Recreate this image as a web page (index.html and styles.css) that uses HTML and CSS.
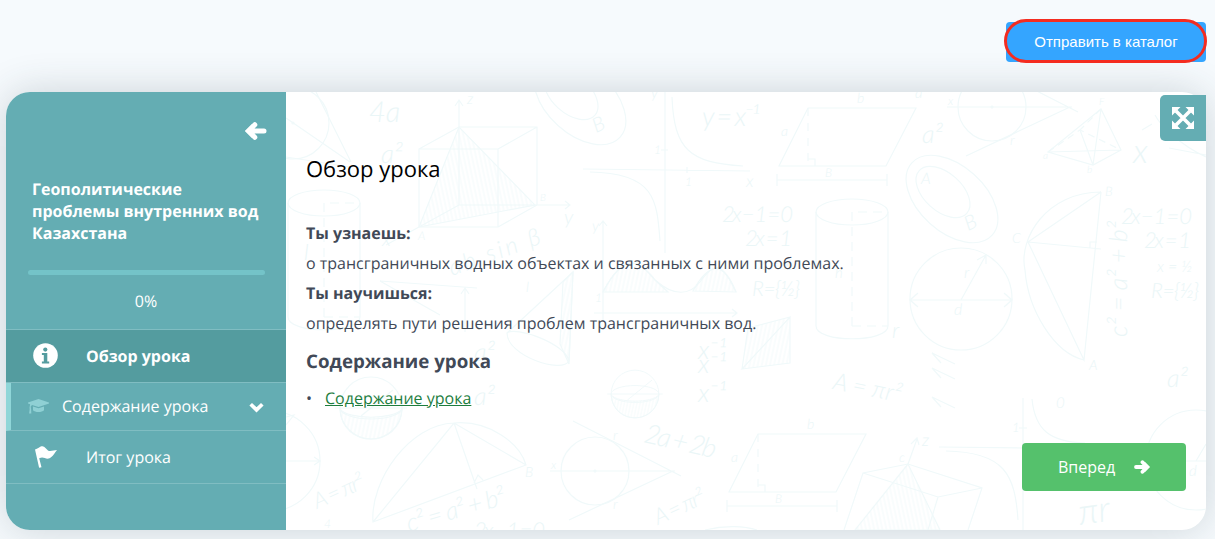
FILE: index.html
```
<!DOCTYPE html>
<html lang="ru">
<head>
    <meta charset="UTF-8">
    <meta name="viewport" content="width=device-width, initial-scale=1.0">
    <title>Обзор урока</title>
    <link rel="stylesheet" href="styles.css">
</head>
<body>

<header class="toolbar">
    <button class="send-button">Отправить в каталог</button>
</header>

<div class="player">
    <aside class="sidebar">
        <button class="collapse" aria-label="Свернуть">
            <svg width="22" height="18" viewBox="0 0 22 18"><path d="M9.800 2.700 3.500 9l6.300 6.300M4 9h15" fill="none" stroke="#fff" stroke-width="5" stroke-linecap="round"/><path d="M0 9 7 2v14z" fill="#fff"/></svg>
        </button>
        <h1 class="lesson-title">Геополитические проблемы внутренних вод Казахстана</h1>
        <div class="progress"></div>
        <div class="percent">0%</div>

        <nav class="menu">
            <a class="menu-item active">
                <svg class="menu-icon" width="25" height="25" viewBox="0 0 25 25"><circle cx="12.500" cy="12.500" r="12.300" fill="#fff"/><circle cx="12.300" cy="6.600" r="2.100" fill="#549c9f"/><path d="M8.900 10h5.400v8.500h1.900v2H8.900v-2h1.900V12H8.900z" fill="#549c9f"/></svg>
                <span>Обзор урока</span>
            </a>
            <a class="menu-item section">
                <svg class="menu-icon" width="21" height="15" viewBox="0 0 21 15"><path d="M10.500 0 21 3.600v1L10.500 8 4 5.900 2.700 7.500l.4 2.500.2 4.500H1.100L1.700 10l-.2-1 .6-3.700L0 4.600v-1z"/><path d="M5 7.500 10.500 9.300 16 7.500v3.700c-2 2.400-9 2.400-11 0z"/></svg>
                <span>Содержание урока</span>
                <svg class="chevron" width="15" height="11" viewBox="0 0 15 11"><path d="M1.700 2.200 7.500 7.900 13.300 2.200" fill="none" stroke="#fff" stroke-width="3.700"/></svg>
            </a>
            <a class="menu-item summary">
                <svg class="menu-icon" width="22" height="22" viewBox="0 0 22 22"><path d="M0 3.500C4 2.500 5 0 8 .4c3 .5 4 4.500 7 4.600 2.500 0 4.500-.8 7-.9-2 2-4 7.200-8 8.400-4 .9-5.500-2.500-9.800-.2l2.300 8.900-2.400.5z" fill="#fff"/></svg>
                <span>Итог урока</span>
            </a>
        </nav>
    </aside>

    <main class="content">
        <svg class="doodles" viewBox="286 92 920 438" aria-hidden="true">
            <defs>
                <pattern id="hatch" width="4" height="8" patternUnits="userSpaceOnUse" patternTransform="rotate(12)"><path d="M1 0v8"/></pattern>
                <pattern id="hatch-back" width="4" height="8" patternUnits="userSpaceOnUse" patternTransform="rotate(-12)"><path d="M1 0v8"/></pattern>
                <g id="tangents">
                    <circle r="34"/><circle r="1"/>
                    <path d="M-45 0H80M-22-50 86 5M-26 49 78 0"/>
                    <text x="-44" y="-2" font-size="12">x</text><text x="18" y="-31" font-size="14">r</text><text x="18" y="38" font-size="14">r</text>
                </g>
                <g id="parallelogram">
                    <path d="M29 0H137L107 58H0zM-2 72H108M-2 66v12M108 66v12M29 51h7v7"/>
                    <path d="M29 0v58" stroke-dasharray="8 7"/>
                    <text x="78" y="-5" font-size="14">b</text><text x="2" y="28" font-size="14">a</text><text x="46" y="69" font-size="12">B</text>
                </g>
                <g id="cylinder">
                    <ellipse rx="36" ry="13"/><path d="M-36 0v114c0 17 72 17 72 0V0"/>
                    <path d="M0 114V0H36M0 114H36" stroke-dasharray="9 6"/>
                </g>
                <g id="sets">
                    <ellipse rx="54" ry="33" transform="rotate(42)"/>
                    <ellipse rx="32" ry="19" transform="translate(-9 -7) rotate(42)"/>
                    <text x="16" y="32" font-size="20" transform="rotate(-25 16 32)">B</text>
                </g>
                <g id="sphere">
                    <circle r="31"/><ellipse rx="31" ry="11"/><path d="M-36 0h72M-10 8 22-18"/>
                    <path d="M-31 1C-23 12 23 12 31 1C29 41-29 41-31 1z" fill="url(#hatch)"/>
                </g>
                <g id="equations">
                    <text font-size="22" textLength="71">2x − 1 = 0</text>
                    <text x="23" y="24" font-size="22" textLength="47">2x = 1</text>
                    <text x="36" y="48" font-size="16">x = ½</text>
                    <text x="30" y="74" font-size="21" textLength="48">R={½}</text>
                </g>
            </defs>

            <g class="lines">
                <circle cx="293" cy="123" r="36"/><circle cx="293" cy="123" r="1"/>
                <path d="M316 92 351 162M286 118 350 162M286 157 350 167"/>
                <path d="M419 149h79v78h-79zM459 127h78v78h-78zM419 149l40-22M498 149l39-22M498 227l39-22M459 205l-40 22M459 205V101M455 106l4-6 4 6M537 205h33M565 201l5 4-5 4M419 227l-33 18"/>
                <path d="M459 127 419 227 535 205z" fill="url(#hatch-back)"/>
                <use href="#cylinder" x="324" y="203"/>
                <use href="#sets" x="580" y="101"/>
                <path d="M380 281 477 288M465 332V289M461 294l4-6 4 6M380 281l60 34"/>
                <path d="M507 333 573 272 569 361C562 374 507 356 507 333zM507 333C515 326 565 343 569 361"/>
                <path d="M563 282l10-10-4 92-9-20z" fill="url(#hatch)"/>

                <path d="M665 92V253M583 169 750 171M661 150h7M687 167v6M672 97C674 150 690 163 743 166M590 172C655 173 657 200 660 241"/>
                <use href="#parallelogram" x="779" y="108"/>
                <use href="#cylinder" x="852" y="212"/>
                <path d="M603 320V221M599 226l4-5 4 5M594 313H737M732 309l5 4-5 4M603 292C625 250 640 261 655 280C674 297 690 295 700 282C715 261 722 262 736 292"/>
                <path d="M603 292C625 250 640 261 655 280L668 292zM693 291C710 260 724 262 736 292z" fill="url(#hatch)"/>

                <use href="#tangents" x="992" y="107"/>
                <use href="#sets" x="952" y="199"/>
                <path d="M1101 109 1048 152 1093 165 1121 150zM1101 109 1093 165M1048 152 1121 150M1093 165 1080 130"/>
                <path d="M1048 152 1080 130 1121 150M1101 109 1080 130" stroke-dasharray="7 5"/>
                <path d="M1155 115C1160 125 1180 145 1206 157M1169 148 1206 155M1142 130l10-6"/>
                <circle cx="961" cy="299" r="51"/><path d="M910 300H1012M918 293l-8 7 8 7M1004 293l8 7-8 7M961 300 986 255M977 260l9-5v9"/>
                <path d="M1101 192C1047 192 1018 238 1025 270C1028 310 1054 353 1084 360M1101 192 1028 242 1084 360 1101 192M1028 242 1101 249M1090 248v-6h7"/>

                <circle cx="270" cy="461" r="50"/><path d="M286 461H320M314 457l6 4-6 4M286 425l8-10-8 2"/>
                <use href="#sphere" x="371" y="408"/>
                <use href="#sphere" transform="translate(635 394) scale(.77)"/>
                <path d="M373 522C370 480 410 424 454 423C490 420 520 444 526 465ZM373 522 454 423 526 465M454 423 477 489M474 483l4-8 5 5"/>
                <use href="#tangents" x="595" y="471"/>
                <path d="M742 369 790 317V363zM742 369 748 328 790 317" fill="url(#hatch)"/>
                <use href="#parallelogram" x="729" y="434"/>
                <path d="M705 530C725 525 745 526 757 530"/>
                <path d="M844 530 863 473 908 464 982 488 968 530M863 473 938 497 982 488M938 497 928 530M908 464 917 439M911 444l6-6 2 7"/>
                <path d="M908 464 855 530H940z" fill="url(#hatch-back)"/>
                <path d="M941 363l-9-10 23 11M941 378l-9-10 23 11M941 407l-9-10 23 11"/>
                <path d="M1023 398V530M939 447 1023 448M1019 428h8M1032 399C1035 430 1050 442 1085 443M946 451C1005 452 1015 475 1018 520"/>
                <circle cx="1196" cy="460" r="50"/><path d="M1186 461H1206M1196 461l10-17"/>
            </g>

            <g class="formulas">
                <text x="369" y="122" font-size="29">4a</text>
                <text x="381" y="163" font-size="26">a²</text>
                <text x="467" y="104" font-size="15">z</text>
                <text x="540" y="201" font-size="10">B</text>
                <text x="564" y="224" font-size="20">y</text>
                <text x="418" y="240" font-size="12">A</text>
                <text x="382" y="246" font-size="20">x</text>
                <text x="452" y="276" font-size="24" transform="rotate(-20 452 276)" textLength="96">ab sin β</text>
                <text x="304" y="260" font-size="22">l</text>
                <text x="526" y="292" font-size="14">l</text>
                <text x="651" y="98" font-size="15">y</text>
                <text x="702" y="126" font-size="27" textLength="58">y = x⁻¹</text>
                <text x="654" y="154" font-size="12">1</text><text x="685" y="186" font-size="12">1</text>
                <text x="746" y="187" font-size="17">x</text>
                <text x="592" y="231" font-size="15">y</text><text x="595" y="302" font-size="12">1</text>
                <text x="835" y="278" font-size="15">h</text>
                <use href="#equations" x="722" y="222"/><use href="#equations" x="1121" y="224"/>
                <text x="915" y="98" font-size="15">a</text>
                <text x="922" y="143" font-size="25">a²</text>
                <text x="921" y="184" font-size="16">A</text>
                <text x="1099" y="105" font-size="10">F</text><text x="1043" y="159" font-size="10">a</text><text x="1087" y="173" font-size="10">b</text>
                <text x="1133" y="163" font-size="34">x</text>
                <text x="1105" y="196" font-size="13">B</text><text x="1012" y="243" font-size="14">C</text><text x="1089" y="370" font-size="14">A</text>
                <text x="1127" y="337" font-size="25" transform="rotate(-90 1127 337)">c² = a² + b²</text>
                <text x="964" y="278" font-size="16">r</text><text x="954" y="315" font-size="16">d</text>
                <text x="892" y="338" font-size="22">r</text>
                <text x="474" y="361" font-size="25">a²</text><text x="474" y="405" font-size="25">a²</text>
                <text x="317" y="509" font-size="22" transform="rotate(-24 317 509)" textLength="54">A = πr²</text>
                <text x="409" y="532" font-size="25" transform="rotate(-16 409 532)" textLength="102">c² = a² + b²</text>
                <text x="474" y="538" font-size="22" textLength="71">2x − 1 = 0</text>
                <text x="525" y="477" font-size="14">B</text><text x="324" y="528" font-size="12">4</text>
                <text x="698" y="359" font-size="26">x⁻¹</text><text x="698" y="373" font-size="26">x⁻¹</text><text x="698" y="402" font-size="26">x⁻¹</text>
                <text x="643" y="442" font-size="27" transform="rotate(13 643 442)" textLength="73">2a + 2b</text>
                <text x="658" y="525" font-size="22" transform="rotate(-25 658 525)" textLength="54">A = πr²</text>
                <text x="832" y="389" font-size="24" transform="rotate(11 832 389)">A = πr²</text>
                <text x="1167" y="387" font-size="25">a²</text>
                <text x="1056" y="408" font-size="15">0</text><text x="1012" y="432" font-size="13">1</text>
                <text x="922" y="446" font-size="17">z</text><text x="899" y="462" font-size="13">c</text>
                <text x="1189" y="476" font-size="15">d</text>
                <text x="1080" y="525" font-size="36" transform="rotate(-8 1080 525)">πr</text>
            </g>
        </svg>

        <article class="lesson">
            <h2>Обзор урока</h2>
            <p><strong>Ты узнаешь:</strong></p>
            <p>о трансграничных водных объектах и связанных с ними проблемах.</p>
            <p><strong>Ты научишься:</strong></p>
            <p>определять пути решения проблем трансграничных вод.</p>
            <h3>Содержание урока</h3>
            <ul class="contents">
                <li><a href="#">Содержание урока</a></li>
            </ul>
            <button class="next-button">
                <span>Вперед</span>
                <svg width="16" height="14" viewBox="0 0 16 14"><path d="M8.500 2.200 13 7l-4.500 4.800M2 7h10" fill="none" stroke="#fff" stroke-width="3.800" stroke-linecap="round"/><path d="M16 7l-5-5v10z" fill="#fff"/></svg>
            </button>
        </article>

        <button class="fullscreen" aria-label="На весь экран">
            <svg width="22" height="22" viewBox="0 0 22 22"><path d="M4 4l14 14M18 4 4 18" stroke="#fff" stroke-width="3.600"/><path d="M0 0h8.500L0 8.500zM22 0v8.500L13.500 0zM0 22v-8.500L8.500 22zM22 22h-8.500l8.500-8.500z" fill="#fff"/></svg>
        </button>
    </main>
</div>

</body>
</html>
```
FILE: styles.css
```
* {
    box-sizing: border-box;
}
body {
    margin: 0;
    height: 539px;
    padding: 22px 9px 9px 6px;
    overflow: hidden;
    background: #f6fafd;
    font-family: "Open Sans", "Noto Sans", sans-serif;
    font-size: 16px;
    color: #414957;
    text-rendering: geometricPrecision;
}
button {
    border: none;
    padding: 0;
    font-family: inherit;
    color: #fff;
    cursor: pointer;
}
h1, h2, h3, p, ul {
    margin: 0;
    padding: 0;
}
.toolbar {
    display: flex;
    justify-content: flex-end;
    margin-bottom: 30px;
}
.send-button {
    position: relative;
    width: 200px;
    height: 40px;
    padding-bottom: 1px;
    border-radius: 4px;
    background: #34a5ff;
    font-family: "Liberation Sans", sans-serif;
    font-size: 15px;
}
/* highlight ring over the button */
.send-button::after {
    content: "";
    position: absolute;
    inset: -3px -1px -1px -2px;
    border: 3px solid #f42c20;
    border-radius: 22px;
}
.player {
    display: flex;
    height: 438px;
    border-radius: 24px;
    background: #fff;
    box-shadow: 0 0 40px rgba(40, 60, 70, 0.2);
}

/* Sidebar */
.sidebar {
    width: 280px;
    display: flex;
    flex-direction: column;
    border-radius: 24px 0 0 24px;
    background: #64adb3;
    color: #fff;
}
.collapse {
    align-self: flex-end;
    height: 18px;
    margin: 30px 19px 0 0;
    background: none;
}
svg {
    display: block;
}
.lesson-title {
    margin: 38px 20px 0 26px;
    font-size: 16px;
    line-height: 22px;
}
.progress {
    height: 5px;
    margin: 26px 21px 0 22px;
    border-radius: 3px;
    background: #74c3c8;
}
.percent {
    margin-top: 15px;
    line-height: 22px;
    text-align: center;
}
.menu {
    margin-top: 17px;
    border-top: 1px solid #80bdc2;
}
.menu-item {
    display: flex;
    align-items: center;
    height: 53px;
    padding: 0 0 1px 27px;
    border-bottom: 1px solid #80bdc2;
}
.menu-item span {
    margin-left: 28px;
    line-height: 22px;
}
.active {
    background: #549c9f;
    font-weight: bold;
}
.section {
    height: 48px;
    padding-left: 17px;
    border-left: 5px solid #8fd6d8;
}
.section span {
    margin-left: 13px;
}
.section .menu-icon {
    fill: #8fd0d4;
}
.chevron {
    margin: 3px 22px 0 auto;
}
.summary .menu-icon {
    margin-left: 2px;
}
.summary span {
    margin-left: 29px;
}

/* Lesson */
.content {
    position: relative;
    flex: 1;
    display: grid;
}
.doodles,
.lesson {
    grid-area: 1 / 1;
}
.doodles {
    width: 920px;
    height: 438px;
    overflow: hidden;
    border-radius: 0 24px 24px 0;
}
.doodles defs,
.lines {
    fill: none;
    stroke: #f0f9fa;
    stroke-width: 1.2;
}
.doodles pattern {
    stroke-width: 0.8;
}
.formulas,
.doodles text {
    fill: #eaf6f7;
    stroke: none;
    font-family: Lato, sans-serif;
    font-style: italic;
    font-weight: 300;
}
.lesson {
    z-index: 1;
    display: flex;
    flex-direction: column;
    padding: 61px 20px 39px;
}
.lesson h2 {
    margin-bottom: 33px;
    font-size: 22px;
    font-weight: normal;
    line-height: 32px;
    color: #000;
}
.lesson p {
    line-height: 30px;
}
.lesson h3 {
    margin: 10px 0 7px;
    font-size: 18.72px;
    line-height: 28px;
}
.contents {
    list-style: none;
    line-height: 30px;
}
.contents li::before {
    content: "•";
    display: inline-block;
    width: 19px;
}
.contents a {
    color: #1d7d3e;
}
.next-button {
    display: flex;
    justify-content: center;
    align-items: center;
    gap: 19px;
    align-self: flex-end;
    width: 164px;
    height: 48px;
    margin-top: auto;
    border-radius: 4px;
    background: #55c16c;
    font-size: 16px;
}
.fullscreen {
    position: absolute;
    top: 3px;
    right: 0;
    z-index: 2;
    display: grid;
    place-items: center;
    width: 46px;
    height: 46px;
    padding: 0 1px 1px 0;
    border-radius: 5px 0 0 5px;
    background: #64adb3;
}
```
